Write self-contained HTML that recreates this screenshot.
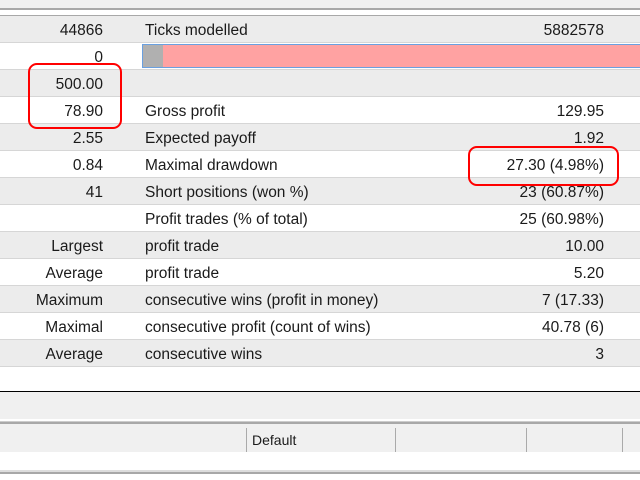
<!DOCTYPE html><html><head><style>
body{margin:0;width:640px;height:480px;background:#fff;position:relative;overflow:hidden;font-family:"Liberation Sans",sans-serif;font-size:15.5px;color:#1a1a1a}
.a{position:absolute;left:0;width:640px}
.r{position:absolute;left:0;width:640px;height:26px;border-bottom:1px solid #d6d6d6}
.g{background:#ececec}
.l{position:absolute;right:537px;top:6px;white-space:nowrap}
.m{position:absolute;left:145px;top:6px;white-space:nowrap}
.v{position:absolute;right:36px;top:6px;white-space:nowrap}
.box{position:absolute;border:2.5px solid #f00;border-radius:9px}
</style></head><body>
<div class="a" style="top:0;height:8px;background:#f0f0f0"></div>
<div class="a" style="top:8px;height:2px;background:#a8a8a8"></div>
<div class="a" style="top:15px;height:1px;background:#a8a8a8"></div>
<div class="r g" style="top:16px"><span class="l">44866</span><span class="m">Ticks modelled</span><span class="v">5882578</span></div>
<div class="r" style="top:43px"><span class="l">0</span>
<div style="position:absolute;left:142px;top:1px;width:500px;height:22px;border:1px solid #6aa0e0;background:#ffa2a2"><div style="width:20px;height:22px;background:#b0b0b0"></div></div></div>
<div class="r g" style="top:70px"><span class="l">500.00</span></div>
<div class="r" style="top:97px"><span class="l">78.90</span><span class="m">Gross profit</span><span class="v">129.95</span></div>
<div class="r g" style="top:124px"><span class="l">2.55</span><span class="m">Expected payoff</span><span class="v">1.92</span></div>
<div class="r" style="top:151px"><span class="l">0.84</span><span class="m">Maximal drawdown</span><span class="v">27.30 (4.98%)</span></div>
<div class="r g" style="top:178px"><span class="l">41</span><span class="m">Short positions (won %)</span><span class="v">23 (60.87%)</span></div>
<div class="r" style="top:205px"><span class="m">Profit trades (% of total)</span><span class="v">25 (60.98%)</span></div>
<div class="r g" style="top:232px"><span class="l">Largest</span><span class="m">profit trade</span><span class="v">10.00</span></div>
<div class="r" style="top:259px"><span class="l">Average</span><span class="m">profit trade</span><span class="v">5.20</span></div>
<div class="r g" style="top:286px"><span class="l">Maximum</span><span class="m">consecutive wins (profit in money)</span><span class="v">7 (17.33)</span></div>
<div class="r" style="top:313px"><span class="l">Maximal</span><span class="m">consecutive profit (count of wins)</span><span class="v">40.78 (6)</span></div>
<div class="r g" style="top:340px"><span class="l">Average</span><span class="m">consecutive wins</span><span class="v">3</span></div>
<div class="a" style="top:391px;height:1px;background:#000"></div>
<div class="a" style="top:392px;height:27px;background:#f0f0f0"></div>
<div class="a" style="top:421px;height:1px;background:#ccc"></div>
<div class="a" style="top:422px;height:2px;background:#a8a8a8"></div>
<div class="a" style="top:424px;height:28px;background:#f0f0f0">
<div style="position:absolute;left:246px;top:4px;width:1px;height:24px;background:#aaa"></div>
<div style="position:absolute;left:395px;top:4px;width:1px;height:24px;background:#aaa"></div>
<div style="position:absolute;left:526px;top:4px;width:1px;height:24px;background:#aaa"></div>
<div style="position:absolute;left:622px;top:4px;width:1px;height:24px;background:#aaa"></div>
<span style="position:absolute;left:252px;top:8px;font-size:14px">Default</span></div>
<div class="a" style="top:470px;height:2px;background:#ddd"></div>
<div class="a" style="top:472px;height:2px;background:#a8a8a8"></div>
<div class="box" style="left:28px;top:63px;width:90px;height:62px"></div>
<div class="box" style="left:468px;top:146px;width:147px;height:36px"></div>
</body></html>
